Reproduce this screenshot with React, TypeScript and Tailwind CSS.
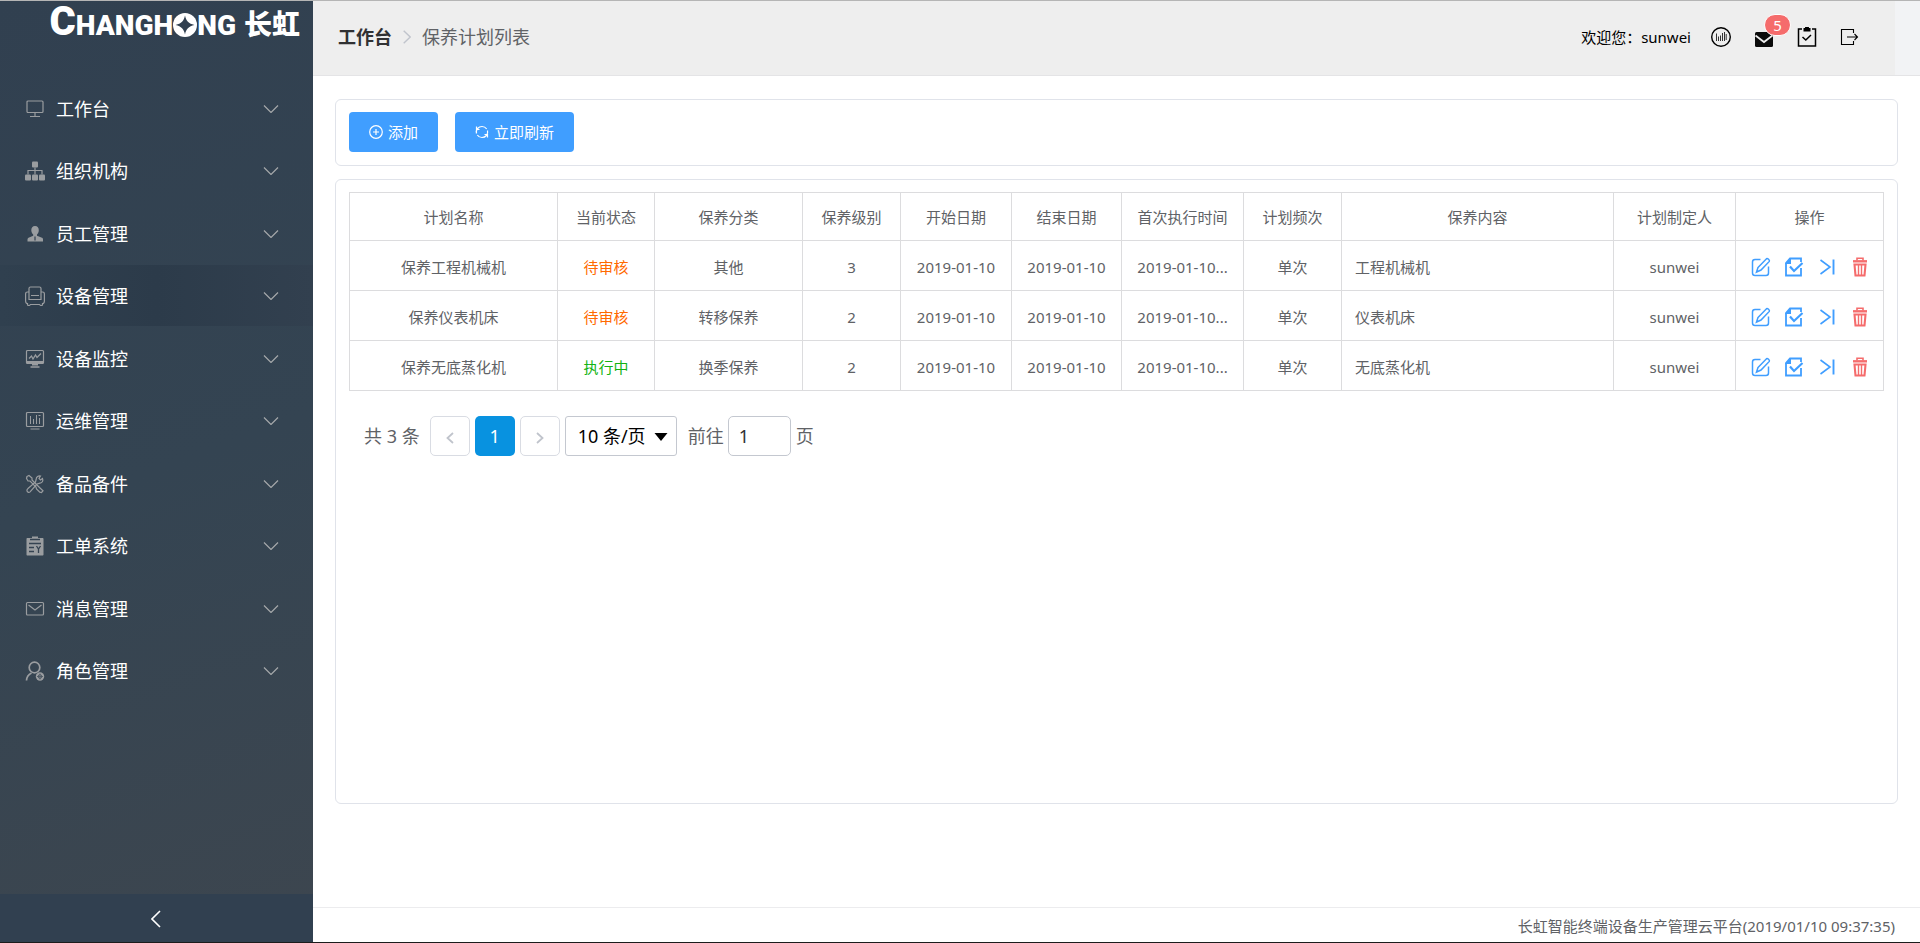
import { useState } from 'react';
import type { ReactNode } from 'react';

type IconProps = { className?: string };

const Svg = ({ className = 'size-5', box = 20, children }: { className?: string; box?: number; children: ReactNode }) => (
  <svg className={className} viewBox={`0 0 ${box} ${box}`} fill="none" stroke="currentColor" strokeWidth="1.2" aria-hidden="true">
    {children}
  </svg>
);

const MonitorIcon = () => (
  <Svg>
    <rect x="2" y="2" width="16" height="11.5" rx="1" />
    <path d="M10 13.5v4M5 17.5h10" />
  </Svg>
);
const OrgIcon = () => (
  <Svg>
    <g fill="currentColor" stroke="none">
      <rect x="7" y="0.5" width="6" height="6" rx="1" />
      <rect x="0" y="13.5" width="6" height="6" rx="1" />
      <rect x="7" y="13.5" width="6" height="6" rx="1" />
      <rect x="14" y="13.5" width="6" height="6" rx="1" />
    </g>
    <path d="M10 6.5v7M3 13.5v-4h14v4" />
  </Svg>
);
const StaffIcon = () => (
  <Svg>
    <path
      fill="currentColor"
      stroke="none"
      d="M10 2c2.6 0 3.8 1.8 3.800 4.200 0 1.800-.8 3.300-1.800 4.200v1.400l5 2c.8.4 1 1 1 1.700V17.500H2.500v-2c0-.7.3-1.300 1-1.700l4.700-2v-1.400c-1-.9-1.900-2.400-1.900-4.200C6.300 3.800 7.500 2 10 2Z"
    />
    <path stroke="#32404f" d="M10 12.500v4" />
  </Svg>
);
const SofaIcon = () => (
  <Svg>
    <path d="M4 6V2.500C4 1.500 4.500 1 5.500 1h9c1 0 1.500.5 1.500 1.500V6M6 9.500h8M4 6v7.500h12V6" />
    <path d="M4 6H2.500C1 6 .6 7 .6 8v7c0 1.500.7 2.500 1.900 2.500V19c1 .8 2 .8 3-.5h9c1 1.300 2 1.300 3 .5v-1.500c1.200 0 1.900-1 1.900-2.500V8c0-1-.4-2-1.900-2H16" />
  </Svg>
);
const PulseIcon = () => (
  <Svg>
    <rect x="1.500" y="1.500" width="17" height="13" rx="1" />
    <path fill="currentColor" stroke="none" d="M2 12h16v3h-5v1.500H7V15H2z" />
    <path strokeWidth="1.300" d="M4 9.500 6.500 7 8 10l2.500-4 1.500 2.500L16 4.500M5.500 18h9" />
  </Svg>
);
const ChartIcon = () => (
  <Svg>
    <rect x="1.500" y="1.500" width="17" height="14" rx="1" />
    <path strokeWidth="1" d="M5.500 5v8M8.500 8v5M11.500 4v9M14.500 7v6M13.500 4.500h2M5.500 18h9" />
  </Svg>
);
const ToolsIcon = () => (
  <Svg>
    <path d="M2 2.500 4 1.500l3 2.500v2l7.500 7.500 3.500 3.300-1.500 1.700-1.700-.3L11.500 15l-.5-2-6-6H3L1.500 4.500z" />
    <path d="M17.500 4.500 15.500 6 14 4.500l1.500-2.500c-2-.5-4.300.7-4.300 3.200L10.500 8 3 14.500c-1.500 1-1.500 3.500.5 3.800 1 .2 1.700-.3 2.200-1.100L12 10l3-.8c2.300-.4 3.500-2.400 2.500-4.700Z" />
  </Svg>
);
const WorkOrderIcon = () => (
  <Svg>
    <path fill="currentColor" stroke="none" d="M2.500 2H7V.5h6V2h4.500c.6 0 1 .4 1 1v15.500c0 .6-.4 1-1 1h-15c-.6 0-1-.4-1-1V3c0-.6.4-1 1-1Z" />
    <path stroke="#354351" strokeWidth="1.300" d="M5 3.500h10M4 7.500h12M4 11.500h5M4 15.500h5M11.500 10l2 3 2-3M13.500 13v4" />
  </Svg>
);
const MailIcon = () => (
  <Svg>
    <rect x="1.500" y="3.500" width="17" height="12.500" rx="1" />
    <path d="m3.500 6 6.500 5 6.500-5" />
  </Svg>
);
const RoleIcon = () => (
  <Svg>
    <circle cx="9.500" cy="6.500" r="5.300" strokeWidth="1.700" />
    <path strokeWidth="1.700" d="M1.500 19.500c.2-3.500 1.800-6 5-7.500" />
    <circle cx="15" cy="15.500" r="4.200" fill="currentColor" stroke="none" />
    <circle cx="15" cy="15.500" r="1.800" stroke="#364450" strokeWidth="0.700" />
    <path stroke="#364450" strokeWidth="0.600" d="M12 15.500h6M15 12.500v6" />
  </Svg>
);

const menu: { label: string; icon: () => ReactNode }[] = [
  { label: '工作台', icon: MonitorIcon },
  { label: '组织机构', icon: OrgIcon },
  { label: '员工管理', icon: StaffIcon },
  { label: '设备管理', icon: SofaIcon },
  { label: '设备监控', icon: PulseIcon },
  { label: '运维管理', icon: ChartIcon },
  { label: '备品备件', icon: ToolsIcon },
  { label: '工单系统', icon: WorkOrderIcon },
  { label: '消息管理', icon: MailIcon },
  { label: '角色管理', icon: RoleIcon },
];

const Logo = () => (
  <a href="#" className="flex h-[46px] items-baseline justify-end pr-[13px] pt-0.5 font-['Roboto','Noto_Sans_CJK_SC',sans-serif] text-[28px]/[38px] font-black text-white">
    <span className="text-[40px]/[38px]">C</span>
    <span>HANGH</span>
    <svg className="size-6 self-center" viewBox="0 0 23 23" aria-label="O">
      <circle cx="11.500" cy="11.500" r="11.500" fill="#fff" />
      <path fill="#314050" d="M11.500 2.500c1 5 3.500 7.800 9 9-5.500 1.200-8 4-9 9-1-5-3.500-7.800-9-9 5.500-1.200 8-4 9-9Z" />
    </svg>
    <span>NG</span>
    <span className="ml-2">长虹</span>
  </a>
);

const Sidebar = () => (
  <aside className="flex w-[313px] shrink-0 flex-col bg-linear-160 from-[#314050] via-[#344452] to-[#3d464f]">
    <Logo />
    <nav className="mt-[30px] flex-1">
      <ul className="grid h-[625px] auto-rows-fr">
        {menu.map(({ label, icon: Icon }) => (
          <li key={label} className="pb-px">
            <button
              type="button"
              className={`flex size-full items-center px-[25px] pt-0.5 text-left text-lg text-white ${label === '设备管理' ? 'bg-linear-to-r from-[#30404f] via-[#2c3b4a] to-[#32404f]' : ''}`}
            >
              <span className="text-[#9a9da0]">
                <Icon />
              </span>
              <span className="ml-[11px] flex-1">{label}</span>
              <svg className="mr-[9px] h-2 w-4 text-[#a5a8aa]" viewBox="0 0 16 8" fill="none" stroke="currentColor" strokeWidth="1.200" aria-hidden="true">
                <path d="m1 .5 7 7 7-7" />
              </svg>
            </button>
          </li>
        ))}
      </ul>
    </nav>
    <button type="button" aria-label="收起" className="flex h-12 items-center justify-center bg-[#314050] pr-0.5 pt-0.5 text-white">
      <svg className="h-[18px] w-2.5" viewBox="0 0 10 18" fill="none" stroke="currentColor" strokeWidth="1.600" aria-hidden="true">
        <path d="M9 1 1 9l8 8" />
      </svg>
    </button>
  </aside>
);

const Header = () => (
  <header className="flex h-[75px] border-b border-[#e4e4e6] bg-[#f2f3f5]">
    <div className="mr-[25px] flex flex-1 items-center justify-between bg-[#eee] pb-0.5 pl-[25px] pr-9">
      <nav className="flex items-center text-lg">
        <a href="#" className="font-bold text-[#303133]">工作台</a>
        <svg className="mx-[11px] h-3.5 w-2" viewBox="0 0 8 14" fill="none" stroke="#c0c4cc" strokeWidth="1.400" aria-hidden="true">
          <path d="m.7.7 6.500 6.300-6.500 6.300" />
        </svg>
        <span className="text-[#606266]">保养计划列表</span>
      </nav>
      <div className="flex items-center text-[15px] text-black">
        <span>欢迎您：sunwei</span>
        <a href="#" aria-label="统计" className="ml-5">
          <Svg className="size-5">
            <circle cx="10" cy="10" r="9.300" strokeWidth="1.400" />
            <path stroke="#333" strokeWidth="1" d="M5.500 6.500v7.500M7.500 9.500v4.500M9.500 8.500v5.500M11.500 6v8M13.500 5v9M15.200 7v6" />
          </Svg>
        </a>
        <a href="#" aria-label="消息" className="relative ml-6">
          <svg className="mt-1 h-[15px] w-[18px]" viewBox="0 0 18 15" aria-hidden="true">
            <rect width="18" height="15" rx="1.500" fill="#0a0a0a" />
            <path d="M.5 3.500 9 10l8.500-6.500" fill="none" stroke="#eee" strokeWidth="1.800" />
          </svg>
          <span className="absolute -top-3.5 left-[9px] flex h-[22px] w-[27px] items-center justify-center rounded-full border border-white bg-[#f56c6c] text-[15px]/5 text-white">5</span>
        </a>
        <a href="#" aria-label="工单" className="ml-6">
          <Svg className="size-5">
            <path strokeWidth="1.500" d="M5 2H1.500v17h17V2H15M5.500 10l3.300 3L14 8" />
            <path fill="currentColor" stroke="none" d="M6.500 1H8a2 2 0 0 1 4 0h1.500v3.500h-7z" />
          </Svg>
        </a>
        <a href="#" aria-label="退出" className="ml-[22px]">
          <Svg className="size-5">
            <path strokeWidth="1.100" d="M14.500 6V2.500h-12v15h12V14M8 10h10.500M15.500 7l3 3-3 3" />
          </Svg>
        </a>
      </div>
    </div>
  </header>
);

const EditIcon = ({ className }: IconProps) => (
  <Svg className={className}>
    <path strokeWidth="1.500" d="M9.500 2.500H4c-2 0-2.500.5-2.500 2.500v11c0 2 .5 2.500 2.500 2.500h11c2 0 2.500-.5 2.500-2.500V9.500" />
    <path strokeWidth="1.500" d="m7 10.500 8.500-8.800c1-.8 3.500 1.500 2.800 2.700L10 13l-4.500 2z" />
  </Svg>
);
const ApproveIcon = ({ className }: IconProps) => (
  <Svg className={className}>
    <path strokeWidth="1.800" d="M17 5V1.500H6L2 6v12.500h15V11" />
    <path fill="currentColor" stroke="none" d="M7 1v6H1z" />
    <path strokeWidth="2.200" d="m6 9.500 4 4.500 8.500-8" />
  </Svg>
);
const NextIcon = ({ className }: IconProps) => (
  <Svg className={className}>
    <path strokeWidth="1.600" d="m3.500 3 9.500 7-9.500 7" />
    <path strokeWidth="1.900" d="M16.500 2.500v15" />
  </Svg>
);
const TrashIcon = ({ className }: IconProps) => (
  <Svg className={className}>
    <path strokeWidth="1.600" d="M7 3.500V1.300h6v2.200" />
    <path strokeWidth="2.400" d="M3 4.300h14" />
    <path strokeWidth="2.100" d="m4.500 7.500 1 11h9l1-11z" />
    <path strokeWidth="1.400" d="M8.500 8v10M11.500 8v10" />
  </Svg>
);

const columns: { label: string; width: string }[] = [
  { label: '计划名称', width: 'w-[208px]' },
  { label: '当前状态', width: 'w-[97px]' },
  { label: '保养分类', width: 'w-[148px]' },
  { label: '保养级别', width: 'w-[98px]' },
  { label: '开始日期', width: 'w-[111px]' },
  { label: '结束日期', width: 'w-[110px]' },
  { label: '首次执行时间', width: 'w-[122px]' },
  { label: '计划频次', width: 'w-[98px]' },
  { label: '保养内容', width: 'w-[272px]' },
  { label: '计划制定人', width: 'w-[122px]' },
  { label: '操作', width: 'w-[148px]' },
];

const rows = [
  { name: '保养工程机械机', status: '待审核', kind: '其他', level: 3, content: '工程机械机' },
  { name: '保养仪表机床', status: '待审核', kind: '转移保养', level: 2, content: '仪表机床' },
  { name: '保养无底蒸化机', status: '执行中', kind: '换季保养', level: 2, content: '无底蒸化机' },
];

const head = 'border border-[#dcdcde] p-0 text-center font-normal';
const cell = 'border border-[#dcdcde] p-0 pt-0.5 text-center';

const PlanTable = () => (
  <table className="w-full table-fixed border-collapse text-[15px]/5 text-[#606266]">
    <thead>
      <tr className="h-12">
        {columns.map((c) => (
          <th key={c.label} scope="col" className={`${head} ${c.width}`}>{c.label}</th>
        ))}
      </tr>
    </thead>
    <tbody>
      {rows.map((r) => (
        <tr key={r.name} className="h-[50px]">
          <td className={cell}>{r.name}</td>
          <td className={`${cell} ${r.status === '待审核' ? 'text-[#ff6a00]' : 'text-[#12b312]'}`}>{r.status}</td>
          <td className={cell}>{r.kind}</td>
          <td className={cell}>{r.level}</td>
          <td className={cell}>2019-01-10</td>
          <td className={cell}>2019-01-10</td>
          <td className={cell}>2019-01-10...</td>
          <td className={cell}>单次</td>
          <td className="border border-[#dcdcde] pb-0 pl-[13px] pr-3 pt-0.5">{r.content}</td>
          <td className={cell}>sunwei</td>
          <td className={cell}>
            <div className="flex items-center justify-center gap-[13px] pl-0.5 text-[#409eff]">
              <button type="button" aria-label="编辑"><EditIcon /></button>
              <button type="button" aria-label="审核"><ApproveIcon /></button>
              <button type="button" aria-label="执行"><NextIcon /></button>
              <button type="button" aria-label="删除" className="text-[#f56c6c]"><TrashIcon /></button>
            </div>
          </td>
        </tr>
      ))}
    </tbody>
  </table>
);

const Pagination = () => {
  const [page, setPage] = useState('1');
  const pager = 'flex size-10 items-center justify-center rounded-[5px] border border-[#d9dce3] text-[#c0c4cc]';
  return (
    <div className="mt-[25px] flex items-center pl-[15px] text-lg text-[#606266]">
      <span className="mr-2.5">共 3 条</span>
      <div className="flex gap-[5px]">
        <button type="button" aria-label="上一页" className={pager}>
          <svg className="mt-1 h-3 w-2" viewBox="0 0 8 12" fill="none" stroke="currentColor" strokeWidth="1.800" aria-hidden="true"><path d="M7 1 1.500 6 7 11" /></svg>
        </button>
        <button type="button" className="size-10 rounded-[5px] bg-[#0892e0] text-white">1</button>
        <button type="button" aria-label="下一页" className={pager}>
          <svg className="mt-1 h-3 w-2" viewBox="0 0 8 12" fill="none" stroke="currentColor" strokeWidth="1.800" aria-hidden="true"><path d="m1 1 5.500 5L1 11" /></svg>
        </button>
        <div className="relative">
          <select aria-label="每页条数" className="h-10 w-28 appearance-none rounded-[3px] border border-[#c4c8d0] bg-white pl-3 text-black">
            <option>10 条/页</option>
          </select>
          <svg className="pointer-events-none absolute right-[9px] top-[17px] h-2 w-3.5" viewBox="0 0 14 8" aria-hidden="true"><path d="M.5 0h13L7 8z" /></svg>
        </div>
      </div>
      <label htmlFor="page" className="ml-[11px] mr-1">前往</label>
      <input
        id="page"
        value={page}
        onChange={(e) => setPage(e.target.value)}
        className="h-10 w-[63px] rounded-[5px] border border-[#c4c8d0] px-2.5 text-[#303133]"
      />
      <span className="ml-[5px]">页</span>
    </div>
  );
};

export default function App() {
  return (
    <div className="flex min-h-screen border-b border-t border-b-[#1c1c1c] border-t-[#b5b5b5] bg-white font-['Noto_Sans','Noto_Sans_CJK_SC',sans-serif]">
      <Sidebar />
      <div className="flex min-w-0 flex-1 flex-col">
        <Header />
        <main className="flex flex-1 flex-col px-[22px] pb-[103px] pt-[23px]">
          <section className="flex gap-[17px] rounded-md border border-[#e0e3ea] px-[13px] pb-[13px] pt-3 text-[15px] text-white">
            <button type="button" className="flex h-10 items-center gap-[5px] rounded bg-[#409eff] px-5">
              <Svg className="size-3.5" box={14}>
                <circle cx="7" cy="7" r="6.300" />
                <path d="M7 4v6M4 7h6" />
              </Svg>
              添加
            </button>
            <button type="button" className="flex h-10 items-center gap-[5px] rounded bg-[#409eff] px-5">
              <Svg className="size-3.5" box={14}>
                <path d="M1.500 8.500C.5 4.500 3.500 1.500 7 1.500c2 0 3.700 1 4.700 2.500M12.500 5.500c1 4-2 7-5.500 7-2 0-3.700-1-4.700-2.500M1.500 1.500v3h3M12.500 12.500v-3h-3" />
              </Svg>
              立即刷新
            </button>
          </section>
          <section className="mt-[13px] flex-1 rounded-md border border-[#e0e3ea] px-[13px] pt-3">
            <PlanTable />
            <Pagination />
          </section>
        </main>
        <footer className="flex h-[35px] items-center justify-end border-t border-[#ececee] pr-[25px] pt-0.5 text-[15px] text-[#606266]">
          长虹智能终端设备生产管理云平台(2019/01/10 09:37:35)
        </footer>
      </div>
    </div>
  );
}
